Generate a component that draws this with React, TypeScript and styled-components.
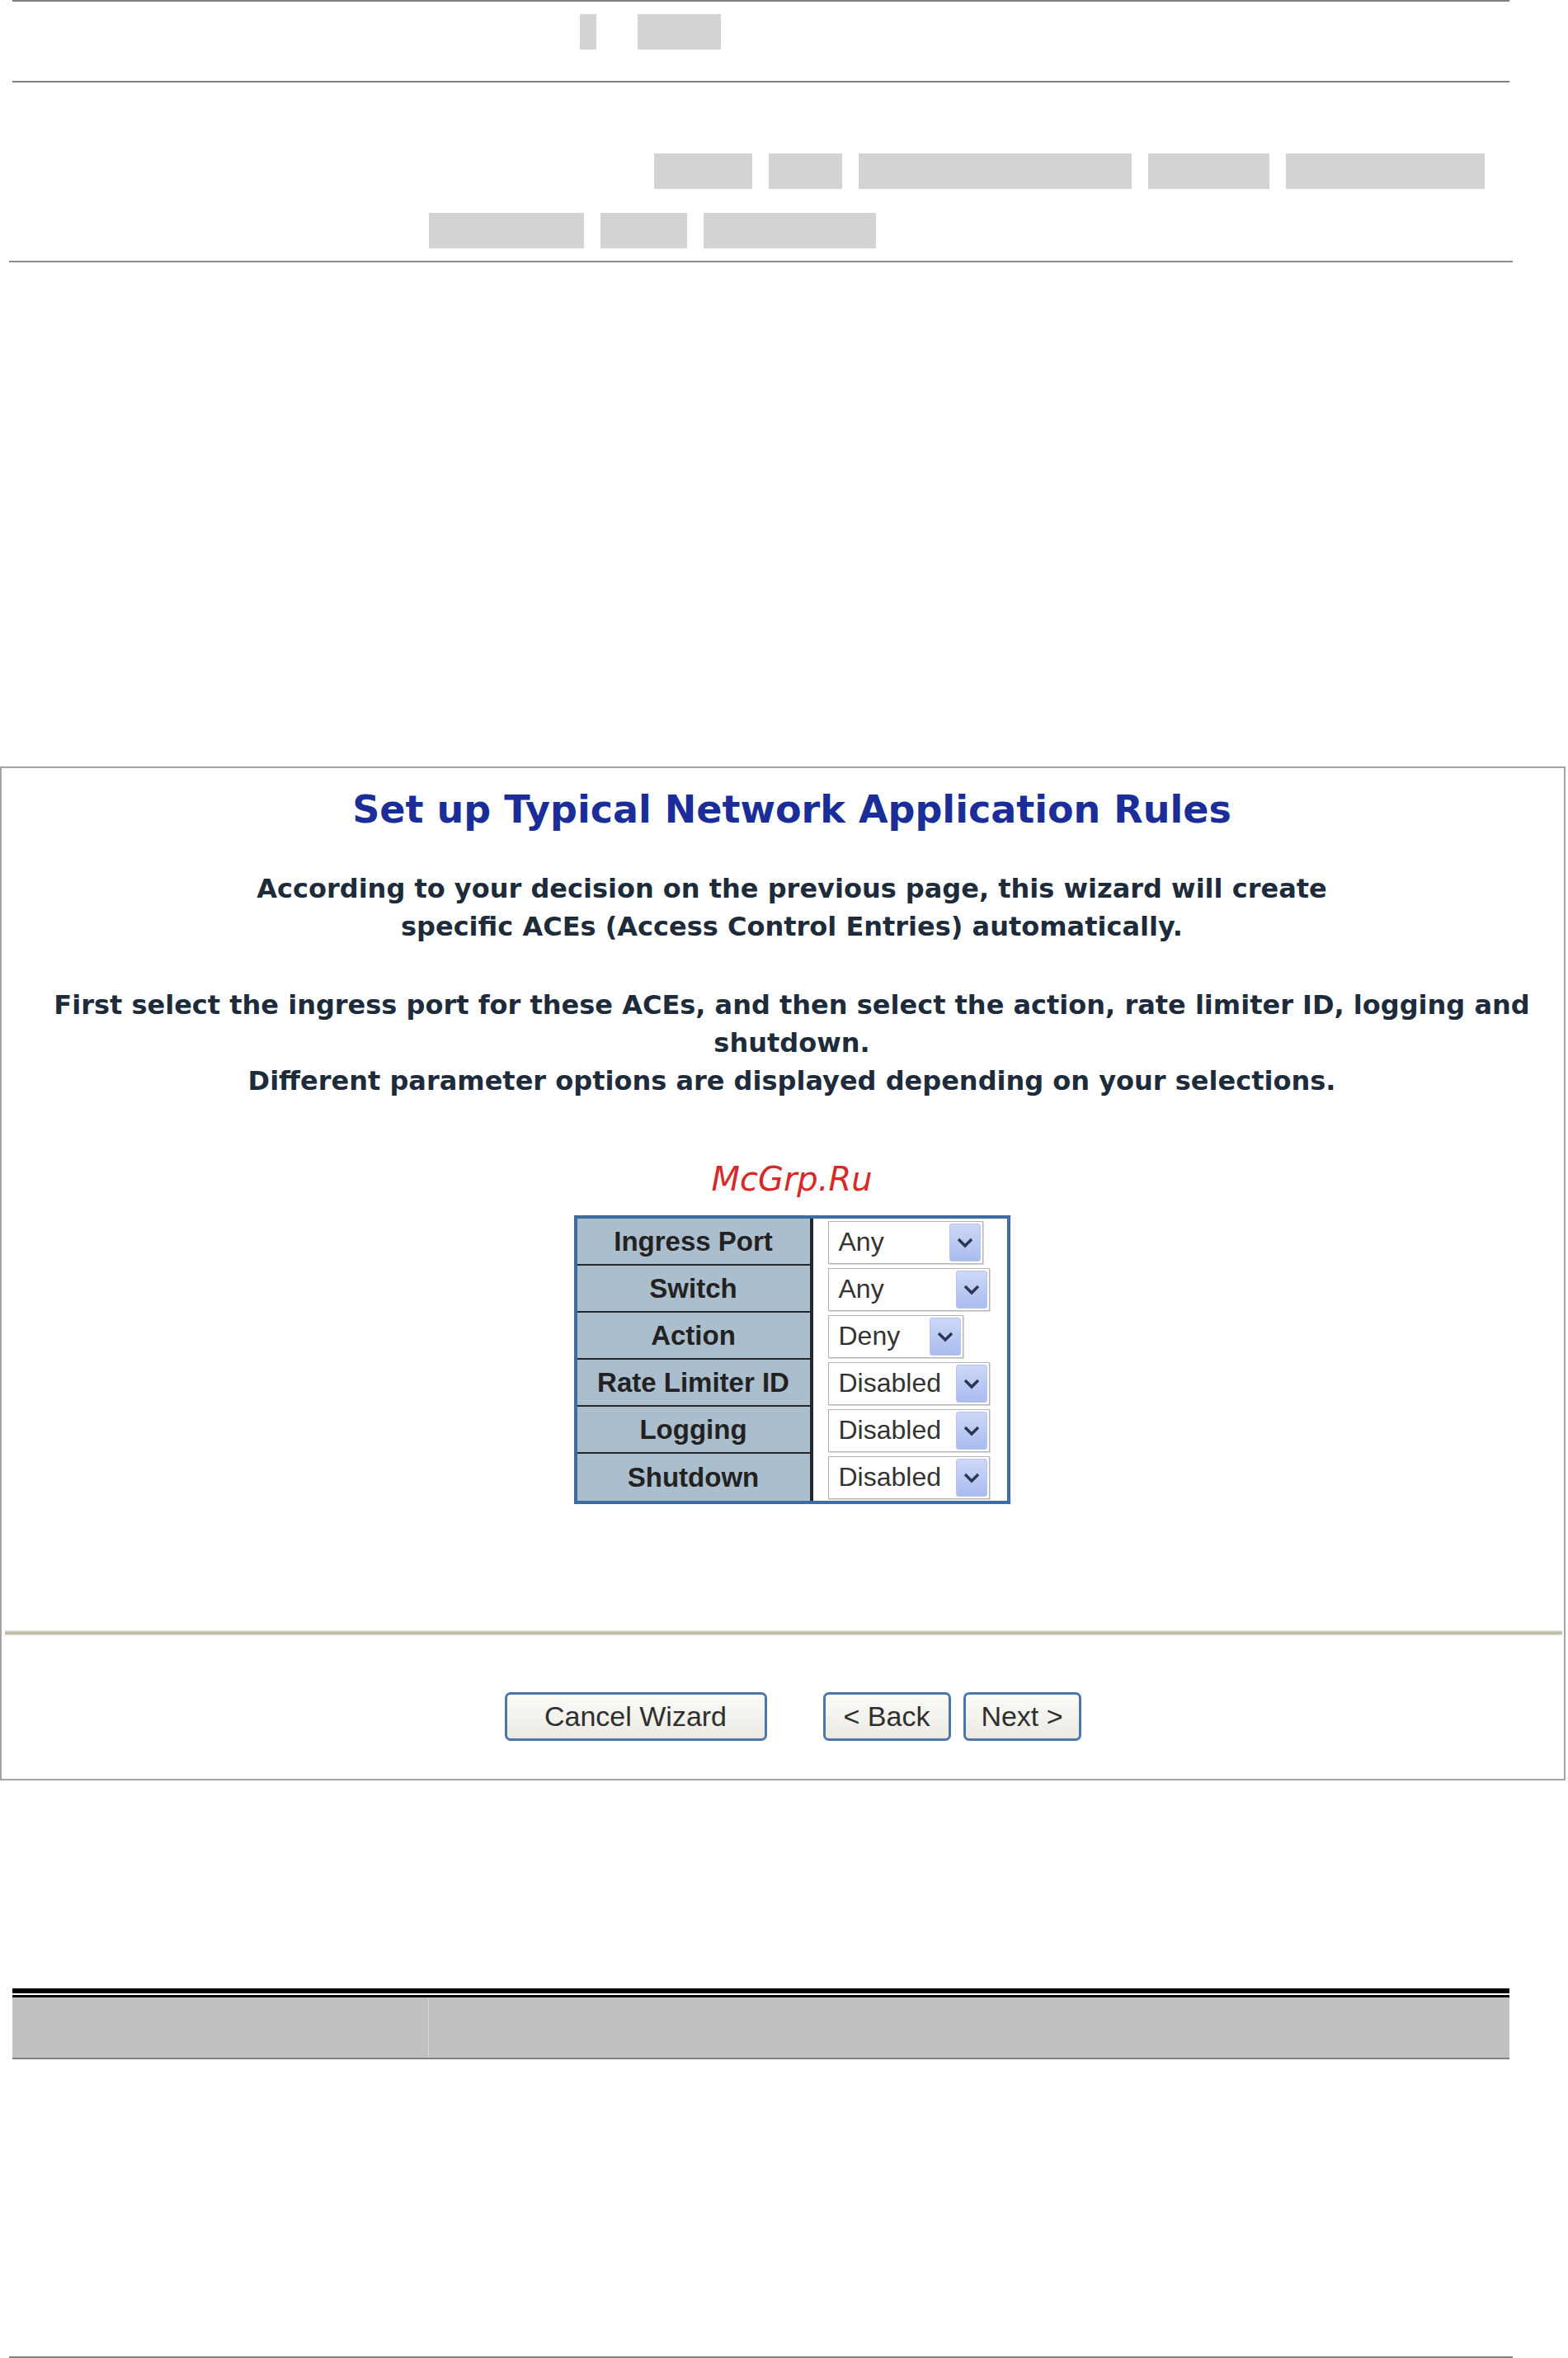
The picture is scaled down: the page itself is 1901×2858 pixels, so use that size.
import React from "react";
import styled, { createGlobalStyle } from "styled-components";

const GlobalStyle = createGlobalStyle`
  html, body {
    margin: 0;
    padding: 0;
    background: #ffffff;
  }
  body {
    font-family: "DejaVu Sans", Verdana, sans-serif;
  }
`;

const Page = styled.div`
  width: 1901px;
`;

const Sheet = styled.section<{ $top?: number }>`
  width: 1815px;
  margin: ${(p) => p.$top ?? 0}px 0 0 15px;
`;

const Rule = styled.div<{ $top?: number; $size?: number; $tone?: string; $bleed?: number }>`
  height: ${(p) => p.$size ?? 2}px;
  margin: ${(p) => p.$top ?? 0}px ${(p) => -(p.$bleed ?? 0)}px 0;
  background: ${(p) => p.$tone ?? "#808080"};
`;

const RedactRow = styled.div<{ $top: number; $indent: number; $gap: number }>`
  display: flex;
  height: 43px;
  margin-top: ${(p) => p.$top}px;
  padding-left: ${(p) => p.$indent}px;
  gap: ${(p) => p.$gap}px;
`;

const Redact = styled.span<{ $w: number }>`
  display: block;
  width: ${(p) => p.$w}px;
  background: #d3d3d3;
`;

/* wizard panel */

const Wizard = styled.section`
  box-sizing: border-box;
  width: 1898px;
  margin-top: 611px;
  border: 2px solid #a3a3a3;
  background: #ffffff;
`;

const Body = styled.div`
  padding: 23px 0 0 22px;
  text-align: center;
`;

const Title = styled.h1`
  margin: 0;
  font-family: "DejaVu Sans", Verdana, sans-serif;
  font-size: 46px;
  line-height: 54px;
  font-weight: bold;
  color: #1b2d98;
`;

const Para = styled.p<{ $top: number }>`
  margin: ${(p) => p.$top}px 0 0;
  font-family: "DejaVu Sans", Verdana, sans-serif;
  font-size: 32px;
  line-height: 46px;
  font-weight: bold;
  color: #1e2b3b;
`;

const Watermark = styled.div`
  margin-top: 72px;
  font-family: "DejaVu Sans", Verdana, sans-serif;
  font-style: italic;
  font-size: 40px;
  line-height: 48px;
  color: #d52a2a;
`;

const RuleTable = styled.table`
  margin: 20px auto 0;
  border: 4px solid #3d6ca3;
  border-spacing: 0;
  border-collapse: separate;

  th {
    width: 282px;
    height: 55px;
    padding: 0;
    background: #abbecd;
    border-right: 4px solid #222a30;
    border-bottom: 2px solid #262626;
    font-family: "Liberation Sans", Arial, sans-serif;
    font-size: 33px;
    font-weight: bold;
    color: #222222;
    text-align: center;
  }

  tr:last-child th {
    height: 57px;
    border-bottom: 0;
  }

  td {
    width: 235px;
    padding: 0 0 0 18px;
    box-sizing: border-box;
    background: #ffffff;
    vertical-align: middle;
  }
`;

const Select = styled.div<{ $w: number }>`
  box-sizing: border-box;
  display: flex;
  align-items: center;
  width: ${(p) => p.$w}px;
  height: 52px;
  padding-left: 12px;
  border: 1px solid #b4b4b4;
  box-shadow: 1px 1px 0 #d9d9d9;
  background: #ffffff;
  font-family: "Liberation Sans", Arial, sans-serif;
  font-size: 32px;
  color: #333333;
`;

const Arrow = styled.span`
  box-sizing: border-box;
  display: flex;
  align-items: center;
  justify-content: center;
  width: 38px;
  height: 46px;
  margin: 0 2px 0 auto;
  border: 1px solid #b6c5ec;
  border-radius: 3px;
  background: linear-gradient(#cdd8f8, #a9bcee);
`;

const Divider = styled.div`
  height: 6px;
  margin: 153px 2px 0 4px;
  background: linear-gradient(#efeee8 0%, #c6c2b1 35%, #b7b3a1 65%, #ebe9df 100%);
`;

const ButtonBar = styled.div<{ $gap: number }>`
  display: flex;
  justify-content: center;
  gap: ${(p) => p.$gap}px;
`;

const Footer = styled(ButtonBar)`
  margin-top: 69px;
  padding: 0 0 46px 24px;
`;

const Button = styled.button<{ $w: number }>`
  box-sizing: border-box;
  width: ${(p) => p.$w}px;
  height: 59px;
  padding: 0;
  border: 3px solid #4d75a7;
  border-radius: 7px;
  background: linear-gradient(#fbfbf8, #ebe9e2);
  font-family: "Liberation Sans", Arial, sans-serif;
  font-size: 34px;
  color: #2f2f2f;
`;

/* bottom table head */

const HeadRow = styled.div`
  display: grid;
  grid-template-columns: 504px 1px 1fr;
  height: 73px;
  background: #c0c0c0;
`;

const HeadCell = styled.div<{ $tone?: string }>`
  background: ${(p) => p.$tone ?? "#c0c0c0"};
`;

const Chevron = () => (
  <svg width="22" height="14" viewBox="0 0 22 14">
    <path d="M3 3 L11 11 L19 3" fill="none" stroke="#2b3652" strokeWidth="3.4" />
  </svg>
);

const rows = [
  { label: "Ingress Port", value: "Any", w: 188 },
  { label: "Switch", value: "Any", w: 196 },
  { label: "Action", value: "Deny", w: 164 },
  { label: "Rate Limiter ID", value: "Disabled", w: 196 },
  { label: "Logging", value: "Disabled", w: 196 },
  { label: "Shutdown", value: "Disabled", w: 196 },
];

export default function App() {
  return (
    <Page>
      <GlobalStyle />
      <Sheet>
        <Rule />
        <RedactRow $top={15} $indent={688} $gap={50}>
          <Redact $w={20} />
          <Redact $w={101} />
        </RedactRow>
        <Rule $top={38} />
        <RedactRow $top={86} $indent={778} $gap={20}>
          <Redact $w={119} />
          <Redact $w={89} />
          <Redact $w={331} />
          <Redact $w={147} />
          <Redact $w={241} />
        </RedactRow>
        <RedactRow $top={29} $indent={505} $gap={20}>
          <Redact $w={188} />
          <Redact $w={105} />
          <Redact $w={209} />
        </RedactRow>
        <Rule $top={15} $tone="#8c8c8c" $bleed={4} />
      </Sheet>

      <Wizard>
        <Body>
          <Title>Set up Typical Network Application Rules</Title>
          <Para $top={46}>
            According to your decision on the previous page, this wizard will create
            <br />
            specific ACEs (Access Control Entries) automatically.
          </Para>
          <Para $top={49}>
            First select the ingress port for these ACEs, and then select the action, rate limiter ID, logging and
            shutdown.
            <br />
            Different parameter options are displayed depending on your selections.
          </Para>
          <Watermark>McGrp.Ru</Watermark>
          <RuleTable>
            <tbody>
              {rows.map((r) => (
                <tr key={r.label}>
                  <th>{r.label}</th>
                  <td>
                    <Select $w={r.w}>
                      {r.value}
                      <Arrow>
                        <Chevron />
                      </Arrow>
                    </Select>
                  </td>
                </tr>
              ))}
            </tbody>
          </RuleTable>
        </Body>
        <Divider />
        <Footer $gap={68}>
          <Button $w={318}>Cancel Wizard</Button>
          <ButtonBar $gap={15}>
            <Button $w={155}>&lt; Back</Button>
            <Button $w={143}>Next &gt;</Button>
          </ButtonBar>
        </Footer>
      </Wizard>

      <Sheet $top={252}>
        <Rule $size={6} $tone="#000000" />
        <Rule $top={2} $size={3} $tone="#000000" />
        <HeadRow>
          <HeadCell />
          <HeadCell $tone="#d6d6d6" />
          <HeadCell />
        </HeadRow>
        <Rule />
        <Rule $top={360} $bleed={4} />
      </Sheet>
    </Page>
  );
}
